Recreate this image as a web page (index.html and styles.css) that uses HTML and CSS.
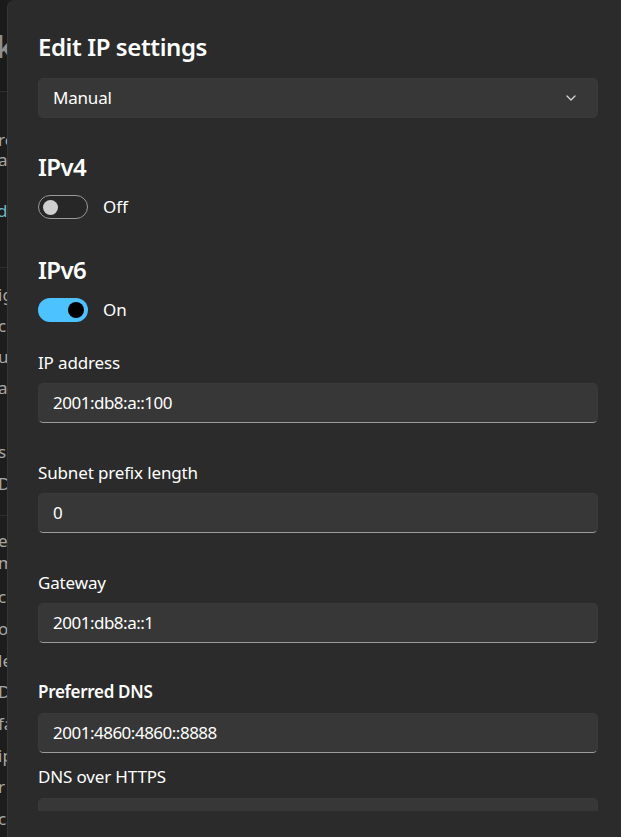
FILE: index.html
```html
<!DOCTYPE html>
<html lang="en">
<head>
<meta charset="utf-8">
<title>Edit IP settings</title>
<link rel="stylesheet" href="styles.css">
</head>
<body>
<div class="screen">
  <div class="under">
    <div class="u-head"><span class="u-big">k</span></div>
    <div class="u-group g1">
      <div class="u-line">re</div>
      <div class="u-line">ap</div>
      <div class="u-line u-link gap31">d</div>
    </div>
    <div class="u-group g2">
      <div class="u-line">ig</div>
      <div class="u-line gap11">c</div>
      <div class="u-line gap11">u</div>
      <div class="u-line gap11">a</div>
      <div class="u-line gap44">se</div>
      <div class="u-line gap12">D</div>
    </div>
    <div class="u-group g3">
      <div class="u-line">eg</div>
      <div class="u-line gap2">m</div>
      <div class="u-line gap14">c</div>
      <div class="u-line gap12">o</div>
      <div class="u-line gap12">le</div>
      <div class="u-line gap11">D</div>
      <div class="u-line gap12">fa</div>
      <div class="u-line gap12">ip</div>
      <div class="u-line gap11">r</div>
      <div class="u-line gap12">ca</div>
    </div>
  </div>

  <div class="dialog">
    <div class="content">
      <h1 class="title">Edit IP settings</h1>

      <div class="select">
        <span class="select-value">Manual</span>
        <svg class="chevron" width="10" height="6" viewBox="0 0 10 6" aria-hidden="true">
          <path d="M1 1 L5 5 L9 1" fill="none" stroke="#d6d6d6" stroke-width="1.3" stroke-linecap="round" stroke-linejoin="round"/>
        </svg>
      </div>

      <h2 class="subtitle first">IPv4</h2>
      <div class="toggle-row">
        <span class="toggle off"><span class="knob"></span></span>
        <span class="toggle-label">Off</span>
      </div>

      <h2 class="subtitle">IPv6</h2>
      <div class="toggle-row">
        <span class="toggle on"><span class="knob"></span></span>
        <span class="toggle-label">On</span>
      </div>

      <div class="field first-field">
        <div class="label">IP address</div>
        <div class="input">2001:db8:a::100</div>
      </div>

      <div class="field">
        <div class="label">Subnet prefix length</div>
        <div class="input">0</div>
      </div>

      <div class="field">
        <div class="label">Gateway</div>
        <div class="input">2001:db8:a::1</div>
      </div>

      <div class="field dns">
        <div class="label strong">Preferred DNS</div>
        <div class="input">2001:4860:4860::8888</div>
      </div>

      <div class="field doh">
        <div class="label">DNS over HTTPS</div>
        <div class="input"></div>
      </div>
    </div>
  </div>
</div>
</body>
</html>
```

FILE: styles.css
```css
* { box-sizing: border-box; }

html, body {
  margin: 0;
  padding: 0;
  width: 621px;
  height: 837px;
  overflow: hidden;
  background: #1c1c1c;
  font-family: "Noto Sans", "Open Sans", sans-serif;
  color: #ffffff;
}

.screen {
  display: flex;
  width: 621px;
  height: 837px;
}

/* underlying settings page, visible as a thin strip */
.under {
  width: 7px;
  flex: none;
  overflow: hidden;
  background: #1d1d1d;
  color: #a8a8a8;
  font-size: 17px;
  white-space: nowrap;
}
.u-head {
  height: 92px;
  border-bottom: 1px solid #2e2e2e;
  background: #1a1a1a;
  padding-top: 29px;
}
.u-big {
  display: block;
  font-size: 30px;
  line-height: 36px;
  font-weight: 600;
  color: #8e8e8e;
  margin-left: -4px;
}
.u-group {
  border-bottom: 1px solid #2e2e2e;
}
.g1 { height: 176px; padding-top: 38px; }
.g2 { height: 248px; padding-top: 17px; }
.g3 { height: 321px; padding-top: 15px; border-bottom: none; }
.u-line {
  height: 20px;
  line-height: 20px;
  margin-left: -2px;
}
.u-link { color: #6cb8c6; margin-left: -3px; }
.gap2 { margin-top: 2px; }
.gap11 { margin-top: 11px; }
.gap12 { margin-top: 12px; }
.gap14 { margin-top: 14px; }
.gap31 { margin-top: 31px; }
.gap44 { margin-top: 44px; }

/* dialog */
.dialog {
  flex: 1;
  background: #2b2b2b;
  border-top-left-radius: 8px;
  border-left: 1px solid #363636;
  overflow: hidden;
}
.content {
  height: 811px;
  overflow: hidden;
  padding: 31px 23px 0 30px;
}

.title {
  margin: 0;
  font-size: 24px;
  line-height: 32px;
  font-weight: 600;
  letter-spacing: -0.4px;
  color: #ffffff;
}

.select {
  margin-top: 15px;
  height: 40px;
  border-radius: 5px;
  background: #373737;
  border: 1px solid #3a3a3a;
  display: flex;
  align-items: center;
  justify-content: space-between;
  padding: 0 21px 0 14px;
  font-size: 17px;
  letter-spacing: -0.2px;
}
.select-value { line-height: 20px; }
.chevron { display: block; }

.subtitle {
  margin: 35px 0 0;
  font-size: 24px;
  line-height: 32px;
  font-weight: 600;
  letter-spacing: -0.6px;
  color: #ffffff;
}
.subtitle.first { margin-top: 33px; }

.toggle-row {
  margin-top: 12px;
  display: flex;
  align-items: center;
  gap: 15px;
  height: 24px;
}
.toggle {
  width: 50px;
  height: 24px;
  border-radius: 12px;
  display: flex;
  align-items: center;
  flex: none;
}
.toggle.off {
  border: 1px solid #9a9a9a;
  background: #272727;
  padding-left: 4px;
}
.toggle.off .knob {
  width: 15px;
  height: 15px;
  border-radius: 50%;
  background: #cfcfcf;
}
.toggle.on {
  background: #4cc2ff;
  justify-content: flex-end;
  padding-right: 4px;
}
.toggle.on .knob {
  width: 16px;
  height: 16px;
  border-radius: 50%;
  background: #000000;
}
.toggle-label {
  font-size: 17px;
  line-height: 20px;
}

.field { margin-top: 40px; }
.field.first-field { margin-top: 31px; }
.field.dns { margin-top: 39px; }
.field.doh { margin-top: 14px; }

.label {
  font-size: 17px;
  line-height: 20px;
  letter-spacing: -0.15px;
  color: #ffffff;
}
.label.strong { font-weight: 600; letter-spacing: -0.3px; }

.input {
  margin-top: 10px;
  height: 40px;
  border-radius: 5px;
  background: #373737;
  border: 1px solid #3a3a3a;
  border-bottom: 1px solid #9c9c9c;
  padding: 0 14px;
  font-size: 17px;
  line-height: 38px;
  letter-spacing: -0.5px;
  color: #ffffff;
}
.dns .input { margin-top: 11px; }
.doh .input { margin-top: 11px; }
```
